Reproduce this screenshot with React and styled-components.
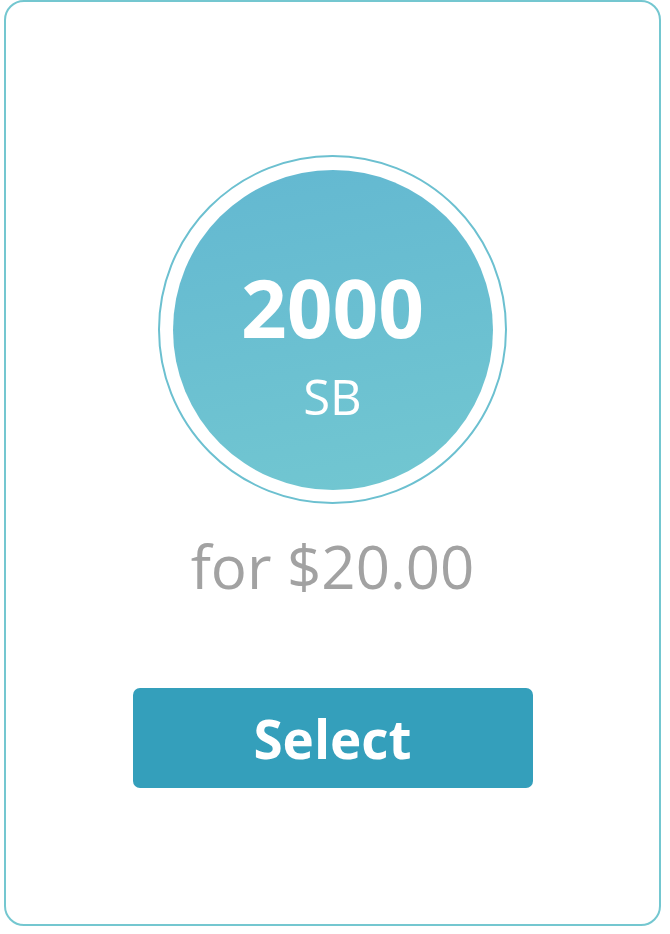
import React from 'react'
import styled, { createGlobalStyle } from 'styled-components'

const GlobalStyle = createGlobalStyle`
  html, body {
    margin: 0;
    padding: 0;
    background: #ffffff;
    font-family: "Open Sans", "Liberation Sans", sans-serif;
  }
`

const Page = styled.div`
  padding: 0 8px 0 4px;
`

const Card = styled.section`
  box-sizing: border-box;
  width: 657px;
  height: 926px;
  border: 2px solid #74c7d0;
  border-radius: 20px;
  display: flex;
  flex-direction: column;
  align-items: center;
  padding-top: 153px;
`

const Ring = styled.div`
  box-sizing: border-box;
  width: 349px;
  height: 349px;
  border-radius: 50%;
  border: 2px solid #6cc0d0;
  display: flex;
  align-items: center;
  justify-content: center;
`

const Disc = styled.div`
  width: 320px;
  height: 320px;
  border-radius: 50%;
  background: linear-gradient(170deg, #63b8d1 0%, #72c7d1 100%);
  display: flex;
  flex-direction: column;
  align-items: center;
  color: #ffffff;
`

const Amount = styled.div`
  font-size: 80px;
  font-weight: 700;
  line-height: 1;
  margin-top: 97px;
`

const Unit = styled.div`
  font-size: 49px;
  font-weight: 400;
  line-height: 1;
  margin-top: 25px;
`

const Price = styled.div`
  font-size: 60px;
  color: #a2a2a2;
  line-height: 1;
  margin-top: 32px;
`

const SelectButton = styled.button`
  width: 400px;
  height: 100px;
  margin-top: 92px;
  border: none;
  border-radius: 7px;
  background: #349fbb;
  color: #ffffff;
  font-family: "Open Sans", "Liberation Sans", sans-serif;
  font-size: 53px;
  font-weight: 700;
  cursor: pointer;
`

const App = () => {
  return (
    <Page>
      <GlobalStyle />
      <Card>
        <Ring>
          <Disc>
            <Amount>2000</Amount>
            <Unit>SB</Unit>
          </Disc>
        </Ring>
        <Price>for $20.00</Price>
        <SelectButton>Select</SelectButton>
      </Card>
    </Page>
  )
}

export default App
